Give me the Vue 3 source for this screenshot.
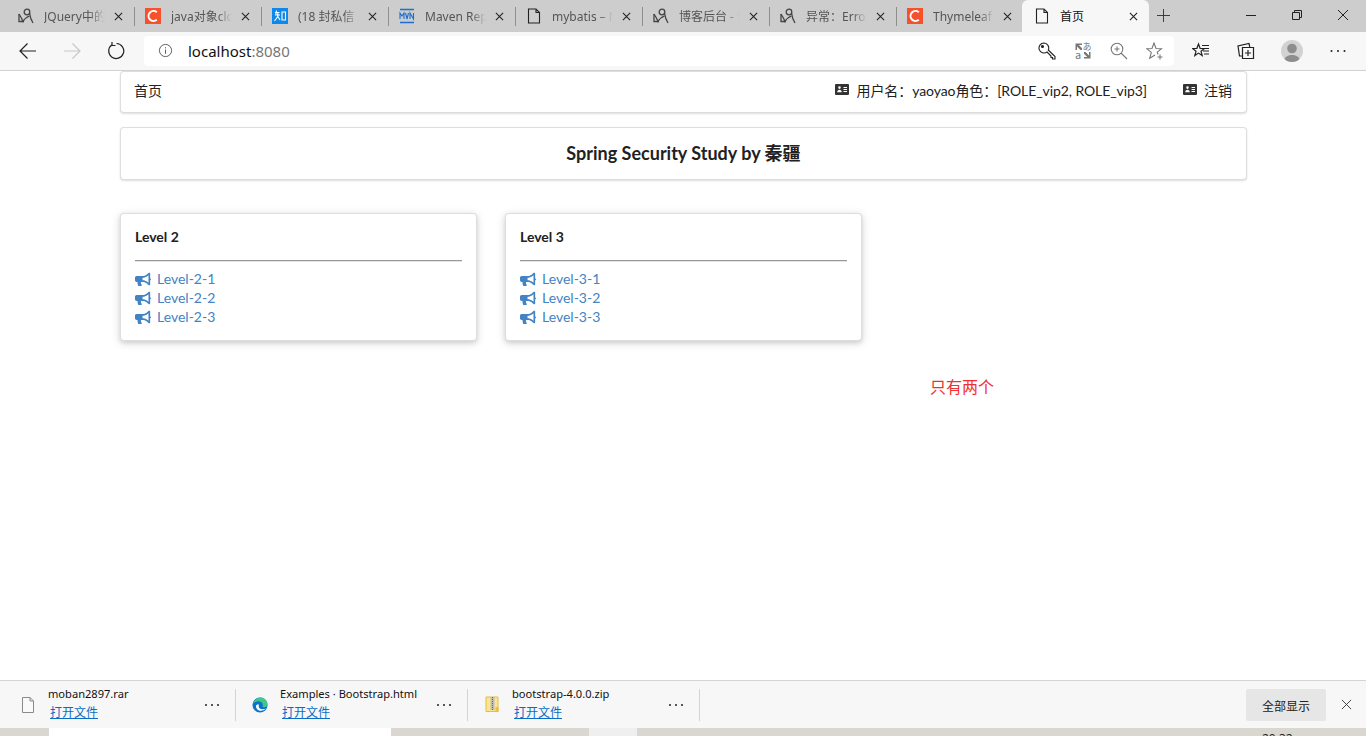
<script setup>
const tabs = [
  { title: 'JQuery中的 attr', icon: 'cnblogs' },
  { title: 'java对象clone', icon: 'csdn' },
  { title: '(18 封私信 / 80', icon: 'zhihu' },
  { title: 'Maven Repository', icon: 'mvn' },
  { title: 'mybatis – MyBatis', icon: 'file' },
  { title: '博客后台 - 博客园', icon: 'cnblogs' },
  { title: '异常：Error resolving', icon: 'cnblogs' },
  { title: 'Thymeleaf 教程', icon: 'csdn' },
  { title: '首页', icon: 'file', active: true },
];

const levels = [
  { name: 'Level 2', links: ['Level-2-1', 'Level-2-2', 'Level-2-3'] },
  { name: 'Level 3', links: ['Level-3-1', 'Level-3-2', 'Level-3-3'] },
];

const downloads = [
  { name: 'moban2897.rar', icon: 'file', width: 236 },
  { name: 'Examples · Bootstrap.html', icon: 'edge', width: 232 },
  { name: 'bootstrap-4.0.0.zip', icon: 'zip', width: 232 },
];
</script>

<template>
  <div class="window">
    <div class="tabstrip">
      <div v-for="tab in tabs" :key="tab.title" class="tab" :class="{ 'tab--active': tab.active }">
        <svg v-if="tab.icon === 'cnblogs'" class="favicon" viewBox="0 0 16 16" fill="none" stroke="#444" stroke-width="1.300">
          <path d="M1 6c2 3 3 5 4 7.500C6.500 10.500 9 9 11.500 8" />
          <circle cx="9" cy="4" r="2.800" />
          <path d="M11.500 5c.5 3.500 1.500 7 3.500 10M1 6v7.500h5" />
        </svg>
        <svg v-else-if="tab.icon === 'csdn'" class="favicon" viewBox="0 0 16 16">
          <rect width="16" height="16" fill="#f4512c" />
          <path d="M11.800 4.200A5 5 0 1 0 11.800 11.800" fill="none" stroke="#fff" stroke-width="2" />
        </svg>
        <svg v-else-if="tab.icon === 'zhihu'" class="favicon" viewBox="0 0 16 16">
          <rect width="16" height="16" fill="#0f88eb" />
          <path d="M3 4.500h4.500M4.500 2.500 3.700 7H8M5.800 4.700V8.500M2.500 13l3.300-4.500L8 12M10 4h3.500v8H10z" fill="none" stroke="#fff" stroke-width="1.100" />
        </svg>
        <svg v-else-if="tab.icon === 'mvn'" class="favicon" viewBox="0 0 16 16">
          <path d="M1 1.500h14M1 14.500h14" stroke="#1b6fd0" stroke-width="1.600" />
          <path d="M1 11V5l2 3 2-3v6M6.500 5l1.500 6 1.500-6M11 11V5l3.500 6V5" fill="none" stroke="#1b6fd0" stroke-width="1.100" />
        </svg>
        <svg v-else class="favicon" viewBox="0 0 16 16" fill="none" stroke="#222" stroke-width="1.100">
          <path d="M2.500 1v14h11V4.500L10 1zM10 1v3.500h3.500" />
        </svg>
        <span class="tab__title">{{ tab.title }}</span>
        <svg class="tab__close" viewBox="0 0 10 10" stroke="#222" stroke-width="1.200">
          <path d="M1 1l8 8M9 1l-8 8" />
        </svg>
      </div>
      <svg class="newtab" viewBox="0 0 14 14" stroke="#333" stroke-width="1">
        <path d="M7 0v14M0 7h14" />
      </svg>
      <div class="winctl">
        <svg viewBox="0 0 12 12" stroke="#222" fill="none"><path d="M1 6.500h10" /></svg>
        <svg viewBox="0 0 12 12" stroke="#222" fill="none"><path d="M1.500 3.500h7v7h-7zM3.500 3.500v-2h7v7h-2" /></svg>
        <svg viewBox="0 0 12 12" stroke="#222" fill="none"><path d="M1 1l10 10M11 1 1 11" /></svg>
      </div>
    </div>

    <div class="toolbar">
      <div class="toolbar__nav">
        <svg viewBox="0 0 18 18" fill="none" stroke="#222" stroke-width="1.200"><path d="M17 9H1M8.500 1.500 1 9l7.500 7.500" /></svg>
        <svg viewBox="0 0 18 18" fill="none" stroke="#c8c8c8" stroke-width="1.200"><path d="M1 9h16M9.500 1.500 17 9l-7.500 7.500" /></svg>
        <svg viewBox="0 0 18 18" fill="none" stroke="#222" stroke-width="1.200"><path d="M5 2.800A7.500 7.500 0 1 0 9.500 1.500M5 0v3.500h3.500" /></svg>
      </div>
      <div class="address">
        <svg class="address__info" viewBox="0 0 16 16" fill="none" stroke="#555">
          <circle cx="8" cy="8" r="6.500" />
          <path d="M8 7v4.500M8 4.500v1.200" />
        </svg>
        <span class="address__host">localhost<span class="address__port">:8080</span></span>
        <div class="address__actions">
          <svg viewBox="0 0 18 18" fill="none" stroke="#222" stroke-width="1.100">
            <path d="M6 1a5 5 0 1 0 3 9l4 4v1.500h1.500V17H17v-2.500L10.300 8A5 5 0 0 0 6 1z" />
            <circle cx="4.500" cy="4.500" r="1" fill="#222" />
          </svg>
          <svg viewBox="0 0 18 18" class="translate">
            <path d="M1.500 1.500H8V3H4.800L8 6.200V8H6.500L3 4.500V8H1.500zM16.500 16.500H10V15h3.200L10 11.800V10h1.500l3.500 3.500V10h1.500z" fill="#777" />
            <text x="8.600" y="8" font-size="9" fill="#777">あ</text>
            <text x="1" y="17" font-size="11" fill="#777">a</text>
          </svg>
          <svg viewBox="0 0 18 18" fill="none" stroke="#777" stroke-width="1.100">
            <circle cx="7" cy="7" r="5.800" />
            <path d="M11 11l6 6M4.500 7h5M7 4.500v5" />
          </svg>
          <svg viewBox="0 0 18 18" fill="none" stroke="#777" stroke-width="1.100">
            <path d="M12 12.500 11.300 10.200 15.500 6.700 10 6.500 8 1 6 6.500 .7 6.700 5.300 10.400 3.700 16.300 9 13" />
            <path d="M11.500 15h5M14 12.500v5" />
          </svg>
        </div>
      </div>
      <div class="toolbar__tools">
        <svg viewBox="0 0 18 18" fill="none" stroke="#222" stroke-width="1.200">
          <path d="M6.500 2l1.600 4.300 4.400.2-3.500 2.800 1.200 4.300-3.700-2.500-3.700 2.500 1.200-4.300L.5 6.500l4.400-.2z" />
          <path d="M11 9h6M12 12h5M10 3.500h7M13 6.500h4" />
        </svg>
        <svg viewBox="0 0 18 18" fill="none" stroke="#222" stroke-width="1.200">
          <path d="M5.500 5.500h11v11h-11zM11 8v6M8 11h6" />
          <path d="M5 14H2.500L1 4l11-2.500.8 3.500" />
        </svg>
        <div class="avatar">
          <svg viewBox="0 0 22 22">
            <circle cx="11" cy="8.500" r="4.800" fill="#8d8d8d" />
            <path d="M3 22c0-5 3.500-7 8-7s8 2 8 7z" fill="#8d8d8d" />
          </svg>
        </div>
        <svg viewBox="0 0 18 18" fill="#222">
          <circle cx="2.500" cy="9" r="1" />
          <circle cx="9" cy="9" r="1" />
          <circle cx="15.500" cy="9" r="1" />
        </svg>
      </div>
    </div>

    <main class="page">
      <div class="segment navbar">
        <span class="navbar__home">首页</span>
        <div class="navbar__right">
          <span class="navbar__item navbar__item--user">
            <svg class="idcard" viewBox="0 0 14 11">
              <path d="M1 0h12a1 1 0 0 1 1 1v9a1 1 0 0 1-1 1H1a1 1 0 0 1-1-1V1a1 1 0 0 1 1-1zM4.500 2.300a1.300 1.300 0 1 0 0 2.600 1.300 1.300 0 0 0 0-2.600zM2.200 8.300h4.600c0-1.600-1-2.600-2.300-2.600s-2.300 1-2.300 2.600zM8.500 3v1h3.500V3zM8.500 5v1h3.500V5zM8.500 7v1h3.500V7z" fill="#333" fill-rule="evenodd" />
            </svg>
            用户名：yaoyao角色：[ROLE_vip2, ROLE_vip3]
          </span>
          <span class="navbar__item">
            <svg class="idcard" viewBox="0 0 14 11">
              <path d="M1 0h12a1 1 0 0 1 1 1v9a1 1 0 0 1-1 1H1a1 1 0 0 1-1-1V1a1 1 0 0 1 1-1zM4.500 2.300a1.300 1.300 0 1 0 0 2.600 1.300 1.300 0 0 0 0-2.600zM2.200 8.300h4.600c0-1.600-1-2.600-2.300-2.600s-2.300 1-2.300 2.600zM8.500 3v1h3.500V3zM8.500 5v1h3.500V5zM8.500 7v1h3.500V7z" fill="#333" fill-rule="evenodd" />
            </svg>
            注销
          </span>
        </div>
      </div>

      <div class="segment heading">Spring Security Study by 秦疆</div>

      <div class="levels">
        <div v-for="level in levels" :key="level.name" class="card">
          <h5 class="card__title">{{ level.name }}</h5>
          <hr class="card__rule" />
          <a v-for="link in level.links" :key="link" class="card__link">
            <svg class="bullhorn" viewBox="0 0 608 512">
              <path d="M576 240V48c0-8.700-7-32-32-32-7.100 0-14.200 2.400-20 7L438.900 91.200C396.200 125.400 342.500 144 288 144H64C28.700 144 0 172.700 0 208v96c0 35.300 28.700 64 64 64h33.700c-1.400 10.500-2.200 21.100-2.200 32 0 39.800 9.300 77.400 25.600 111 5.200 10.700 16.500 17 28.400 17h74.300c26.100 0 41.700-29.900 25.900-50.600-16.400-21.500-26.200-48.300-26.200-77.400 0-11.100 1.600-21.800 4.400-32H288c54.500 0 108.200 18.600 150.900 52.800l85.100 68.200c5.700 4.600 12.800 7 20 7 25 0 32-22.900 32-32V304c17.700 0 32-14.300 32-32s-14.300-32-32-32zM512 398.500l-33.300-26.700C424.900 328.900 357.100 304 288 304V208c69.100 0 136.900-24.900 190.700-67.800L512 113.500z" fill="#4183c4" fill-rule="evenodd" />
            </svg>
            {{ link }}
          </a>
        </div>
      </div>

      <span class="note">只有两个</span>
    </main>

    <div class="downloads">
      <div v-for="item in downloads" :key="item.name" class="download" :class="'download--' + item.icon" :style="{ width: item.width + 'px' }">
        <svg v-if="item.icon === 'file'" class="download__icon" viewBox="0 0 16 18" fill="#fafafa" stroke="#8a8a8a">
          <path d="M2.500 1.500h7.500l3.500 3.500v11.500h-11zM10 1.500V5h3.500" />
        </svg>
        <svg v-else-if="item.icon === 'edge'" class="download__icon" viewBox="0 0 18 18">
          <circle cx="9" cy="9" r="8.500" fill="#0c73c9" />
          <path d="M1 7.500C3 2 8-.5 12.500 1c3 1.200 5 4 5 7.500 0 2.500-2.500 3.500-4.500 3-1-.3-1.200-1.200-.8-2.200C12.500 6.500 9 4 5.500 5 3.500 5.600 2 6.500 1 7.500z" fill="#3fc88a" />
          <path d="M4.500 10c0 3 2.500 5.500 5.500 5.500 2 0 4-.8 5.500-2.500-2 1-4 1-5.500.5C8 13 7 11 7.800 8.500 5.800 8 4.500 9 4.500 10z" fill="#fff" />
        </svg>
        <svg v-else class="download__icon" viewBox="0 0 16 18">
          <path d="M2 1h12v14.500H2z" fill="#fde58b" stroke="#e0bd55" />
          <path d="M6.500 1h4v13h-4z" fill="#bdbdbd" />
          <path d="M8.500 1v13" stroke="#666" stroke-dasharray="1 1" />
          <path d="M11.500 11h3v5h-3z" fill="#f1bd3a" />
        </svg>
        <div class="download__text">
          <span class="download__name">{{ item.name }}</span>
          <a class="download__open">打开文件</a>
        </div>
        <svg class="download__more" viewBox="0 0 16 4" fill="#222">
          <circle cx="2" cy="2" r="1" />
          <circle cx="8" cy="2" r="1" />
          <circle cx="14" cy="2" r="1" />
        </svg>
      </div>
      <div class="downloads__end">
        <button class="showall">全部显示</button>
        <svg class="downloads__close" viewBox="0 0 12 12" stroke="#333" fill="none">
          <path d="M1 1l10 10M11 1 1 11" />
        </svg>
      </div>
    </div>

    <div class="desktop">
      <div class="desktop__white"></div>
      <div class="desktop__gap"></div>
      <div class="desktop__pale"></div>
      <div class="desktop__clock">20:32</div>
    </div>
  </div>
</template>

<style scoped>
  .window {
    display: flex;
    flex-direction: column;
    height: 736px;
    overflow: hidden;
    background: #fff;
    font-family: "Noto Sans", "Noto Sans CJK SC", sans-serif;
  }

  .tabstrip {
    display: flex;
    flex: 0 0 32px;
    padding-left: 7px;
    background: #cdcdcd;
  }

  .tab {
    position: relative;
    display: flex;
    align-items: center;
    box-sizing: border-box;
    width: 127px;
    height: 32px;
    padding: 0 11px;
    font-size: 12px;
    color: #555;
  }

  .tab:not(.tab--active):not(:nth-child(8))::after {
    content: "";
    position: absolute;
    top: 7px;
    right: -1px;
    width: 1px;
    height: 19px;
    background: #8e8e8e;
  }

  .tab--active {
    margin-left: -1px;
    padding-left: 12px;
    color: #111;
    background: #f7f7f7;
    border-radius: 6px 6px 0 0;
  }

  .favicon {
    flex: none;
    width: 16px;
    height: 16px;
    margin-right: 10px;
  }

  .tab__title {
    flex: 1;
    overflow: hidden;
    white-space: nowrap;
    -webkit-mask-image: linear-gradient(to right, #000 75%, transparent 98%);
    mask-image: linear-gradient(to right, #000 75%, transparent 98%);
  }

  .tab--active .tab__title {
    -webkit-mask-image: none;
    mask-image: none;
  }

  .tab__close {
    flex: none;
    width: 9px;
    height: 9px;
    margin-left: 8px;
  }

  .newtab {
    width: 13px;
    height: 13px;
    margin: 9px 0 0 8px;
  }

  .winctl {
    display: flex;
    gap: 34px;
    margin-left: auto;
    padding: 9px 17px 0 0;
  }

  .winctl svg {
    width: 12px;
    height: 12px;
  }

  .toolbar {
    display: flex;
    flex: 0 0 39px;
    box-sizing: border-box;
    align-items: center;
    background: #f7f7f7;
    border-bottom: 1px solid #d2d2d2;
  }

  .toolbar__nav {
    display: flex;
    gap: 26px;
    padding: 0 19px;
  }

  .toolbar__nav svg {
    width: 18px;
    height: 18px;
  }

  .address {
    display: flex;
    align-items: center;
    width: 1030px;
    height: 30px;
    margin-top: -1px;
    background: #fff;
    border-radius: 4px;
  }

  .address__info {
    width: 15px;
    height: 15px;
    margin-left: 14px;
  }

  .address__host {
    margin-left: 15px;
    font-size: 15px;
    color: #111;
  }

  .address__port {
    color: #767676;
  }

  .address__actions {
    display: flex;
    gap: 18px;
    margin-left: auto;
    padding-right: 10px;
  }

  .address__actions svg {
    width: 18px;
    height: 18px;
  }

  .translate text {
    font-family: "Noto Sans CJK JP", "Noto Sans", sans-serif;
  }

  .toolbar__tools {
    display: flex;
    align-items: center;
    gap: 27px;
    padding-left: 18px;
  }

  .toolbar__tools svg {
    width: 18px;
    height: 18px;
  }

  .avatar {
    width: 22px;
    height: 22px;
    margin: 0 -1px;
    border-radius: 50%;
    background: #d2d2d2;
    overflow: hidden;
  }

  .avatar svg {
    display: block;
    width: 22px;
    height: 22px;
  }

  .page {
    position: relative;
    flex: 1;
    box-sizing: border-box;
    padding: 0 119px 0 120px;
    font-family: Lato, "Noto Sans CJK SC", sans-serif;
    font-size: 14px;
    color: #212121;
  }

  .segment {
    box-sizing: border-box;
    border: 1px solid rgba(34, 36, 38, 0.15);
    border-radius: 4px;
    box-shadow: 0 1px 2px 0 rgba(34, 36, 38, 0.15);
    background: #fff;
  }

  .navbar {
    display: flex;
    align-items: center;
    justify-content: space-between;
    height: 42px;
    padding: 0 14px 4px 13px;
  }

  .navbar__right {
    display: flex;
    gap: 36px;
    margin-top: -1px;
  }

  .navbar__item {
    display: flex;
    align-items: center;
    gap: 7px;
    white-space: nowrap;
  }

  .navbar__item--user {
    letter-spacing: -0.080px;
  }

  .idcard {
    width: 14px;
    height: 11px;
  }

  .heading {
    display: flex;
    align-items: center;
    justify-content: center;
    height: 53px;
    margin-top: 14px;
    padding-bottom: 4px;
    font-size: 18px;
    font-weight: 700;
  }

  .levels {
    display: grid;
    grid-template-columns: repeat(3, 357px);
    gap: 28px;
    margin-top: 33px;
  }

  .card {
    display: flex;
    flex-direction: column;
    box-sizing: border-box;
    height: 128px;
    padding: 14px;
    border: 1px solid rgba(34, 36, 38, 0.15);
    border-radius: 4px;
    background: #fff;
    box-shadow: 0 2px 4px 0 rgba(34, 36, 38, 0.12), 0 2px 10px 0 rgba(34, 36, 38, 0.15);
  }

  .card__title {
    margin: -1px 0 0;
    font-size: 14px;
    font-weight: 700;
    line-height: 20px;
    color: #212121;
  }

  .card__rule {
    width: 100%;
    margin: 13px 0 7px;
    border: 0;
    border-top: 1px solid #999;
    border-bottom: 1px solid #e4e4e4;
  }

  .card__link {
    display: flex;
    align-items: center;
    gap: 6px;
    height: 19px;
    color: #4183c4;
  }

  .bullhorn {
    width: 16px;
    height: 14px;
  }

  .note {
    position: absolute;
    top: 303px;
    left: 930px;
    font-size: 16px;
    color: #f03030;
  }

  .downloads {
    display: flex;
    flex: 0 0 48px;
    box-sizing: border-box;
    padding-top: 8px;
    background: #f7f7f7;
    border-top: 1px solid #d4d4d4;
  }

  .download {
    display: flex;
    box-sizing: border-box;
    align-items: center;
    height: 32px;
    padding-left: 16px;
    border-right: 1px solid #d4d4d4;
    font-size: 11.100px;
  }

  .download--file {
    padding-left: 20px;
  }

  .download__icon {
    flex: none;
    width: 16px;
    height: 18px;
    margin-right: 12px;
  }

  .download__text {
    display: flex;
    flex: 1;
    flex-direction: column;
    line-height: 17px;
    white-space: nowrap;
  }

  .download__name {
    margin-top: -5px;
    color: #111;
  }

  .download__open {
    margin: 2px 0 0 2px;
    font-size: 12px;
    color: #0a6cc4;
    text-decoration: underline;
  }

  .download__more {
    flex: none;
    width: 16px;
    height: 4px;
    margin-right: 15px;
  }

  .downloads__end {
    display: flex;
    align-items: flex-start;
    margin-left: auto;
  }

  .showall {
    width: 80px;
    height: 32px;
    border: 0;
    border-radius: 2px;
    background: #e6e6e6;
    font-family: "Noto Sans CJK SC", sans-serif;
    font-size: 12px;
    color: #222;
  }

  .downloads__close {
    width: 11px;
    height: 11px;
    margin: 10px 14px 0 15px;
  }

  .desktop {
    display: flex;
    flex: 0 0 8px;
    overflow: hidden;
    background: #d9d7d0;
  }

  .desktop__white {
    width: 342px;
    height: 8px;
    margin-left: 49px;
    background: #fff;
  }

  .desktop__gap {
    width: 198px;
  }

  .desktop__pale {
    width: 48px;
    height: 8px;
    background: #efefef;
  }

  .desktop__clock {
    margin: 4px 0 0 625px;
    font-size: 12px;
    line-height: 14px;
    color: #222;
  }
</style>

<style>
  body {
    margin: 0;
    overflow: hidden;
  }
</style>
